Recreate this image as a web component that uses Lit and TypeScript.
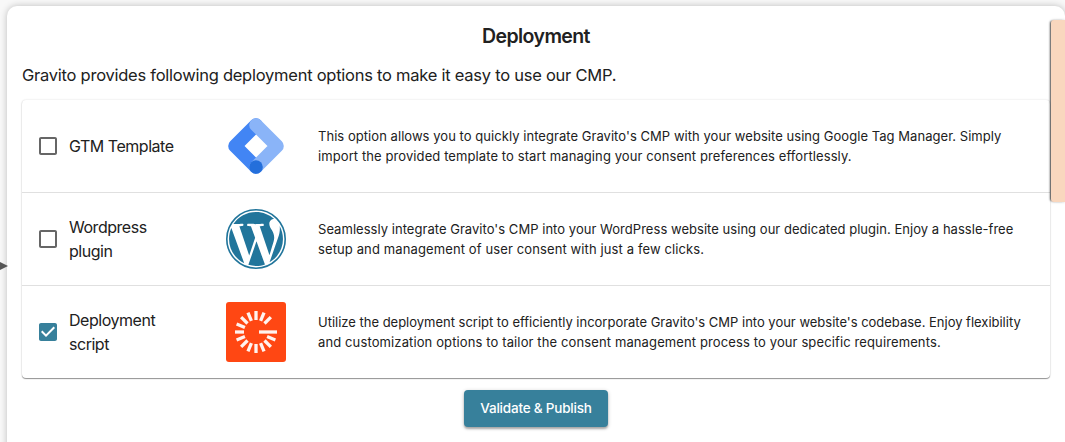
import { LitElement, html, svg, css } from "lit";
import { customElement, property, state } from "lit/decorators.js";
import { classMap } from "lit/directives/class-map.js";
import { styleMap } from "lit/directives/style-map.js";

const gtmLogo = svg`
  <path d="M30 9 L9 30 L30 51" fill="none" stroke="#4285f4" stroke-width="13.6" stroke-linejoin="round" stroke-linecap="round"/>
  <path d="M30 9 L51 30 L30 51" fill="none" stroke="#8ab4f8" stroke-width="13.6" stroke-linejoin="round" stroke-linecap="round"/>
  <circle cx="30" cy="51" r="6.8" fill="#246fdb"/>`;

const wordpressLogo = svg`
  <circle cx="30" cy="30" r="29.2" fill="#fff" stroke="#21759b" stroke-width="1.6"/>
  <path transform="scale(2.5)" fill="#21759b" d="M21.469 6.825c.84 1.537 1.318 3.3 1.318 5.175 0 3.979-2.156 7.456-5.363 9.325l3.295-9.527c.615-1.54.82-2.771.82-3.864 0-.405-.026-.78-.07-1.11m-7.981.105c.647-.03 1.232-.105 1.232-.105.582-.075.514-.93-.067-.899 0 0-1.755.135-2.88.135-1.064 0-2.85-.15-2.85-.15-.585-.03-.661.855-.075.885 0 0 .54.061 1.125.09l1.68 4.605-2.37 7.08L5.354 6.9c.649-.03 1.234-.1 1.234-.1.585-.075.516-.93-.065-.896 0 0-1.746.138-2.874.138-.2 0-.438-.008-.69-.015C4.911 3.15 8.235 1.215 12 1.215c2.809 0 5.365 1.072 7.286 2.833-.046-.003-.091-.009-.141-.009-1.06 0-1.812.923-1.812 1.914 0 .89.513 1.643 1.06 2.531.411.72.89 1.643.89 2.977 0 .915-.354 1.994-.821 3.479l-1.075 3.585-3.9-11.61.001.014zM12 22.784c-1.059 0-2.081-.153-3.048-.437l3.237-9.406 3.315 9.087c.024.053.05.101.078.149-1.12.393-2.325.609-3.582.609M1.211 12c0-1.564.336-3.05.935-4.39L7.29 21.709C3.694 19.96 1.212 16.271 1.211 12"/>`;

// Spokes sit every 22.5 degrees; the gap and the long bar form the G.
const spokes = Array.from({ length: 14 }, (_, i) => (i + 1) * 22.5);
const gravitoLogo = svg`
  <rect width="60" height="60" rx="3" fill="#ff4713"/>
  <path d="M33 30H51" stroke="#fff3ef" stroke-width="3.3"/>
  ${spokes.map(
    (a) => svg`<path d="M42 30H51" stroke="#fff3ef" stroke-width="3.3" transform=${`rotate(${a} 30 30)`}/>`
  )}`;

interface Line {
  copy: string;
  tracking: number;
}

interface Option {
  label: string[];
  logo: unknown;
  text: Line[];
  checked: boolean;
}

@customElement("check-box")
class CheckBox extends LitElement {
  @property({ type: Boolean }) checked = false;

  static styles = css`
    :host { display: block; width: 24px; height: 24px; cursor: pointer; }
    svg { display: block; }
    .off { fill: #666; }
    .on { fill: #37809b; }
  `;

  render() {
    return html`<svg class=${classMap({ on: this.checked, off: !this.checked })} width="24" height="24" viewBox="0 0 24 24">
      ${this.checked
        ? svg`<path d="M19 3H5c-1.11 0-2 .9-2 2v14c0 1.1.89 2 2 2h14c1.11 0 2-.9 2-2V5c0-1.1-.89-2-2-2zm-9 14l-5-5 1.41-1.41L10 14.17l7.59-7.59L19 8l-9 9z"/>`
        : svg`<path d="M19 5v14H5V5h14m0-2H5c-1.1 0-2 .9-2 2v14c0 1.1.9 2 2 2h14c1.1 0 2-.9 2-2V5c0-1.1-.9-2-2-2z"/>`}
    </svg>`;
  }
}

@customElement("app-root")
class AppRoot extends LitElement {
  @state() private options: Option[] = [
    {
      label: ["GTM Template"],
      logo: gtmLogo,
      text: [
        {
          copy: "This option allows you to quickly integrate Gravito's CMP with your website using Google Tag Manager. Simply",
          tracking: 0.046,
        },
        { copy: "import the provided template to start managing your consent preferences effortlessly.", tracking: 0.094 },
      ],
      checked: false,
    },
    {
      label: ["Wordpress", "plugin"],
      logo: wordpressLogo,
      text: [
        {
          copy: "Seamlessly integrate Gravito's CMP into your WordPress website using our dedicated plugin. Enjoy a hassle-free",
          tracking: 0.037,
        },
        { copy: "setup and management of user consent with just a few clicks.", tracking: 0.117 },
      ],
      checked: false,
    },
    {
      label: ["Deployment", "script"],
      logo: gravitoLogo,
      text: [
        {
          copy: "Utilize the deployment script to efficiently incorporate Gravito's CMP into your website's codebase. Enjoy flexibility",
          tracking: -0.012,
        },
        {
          copy: "and customization options to tailor the consent management process to your specific requirements.",
          tracking: 0.12,
        },
      ],
      checked: true,
    },
  ];

  static styles = css`
    :host {
      display: block;
      position: relative;
      box-sizing: border-box;
      height: 442px;
      padding: 6px 0 0 7px;
      overflow: hidden;
      background: #f8f8f8;
      color: #212121;
      font-family: Inter, "Liberation Sans", sans-serif;
    }
    .card {
      box-sizing: border-box;
      height: 460px;
      padding: 15px 15px 0;
      border-radius: 10px;
      background: #fff;
      box-shadow: 0 0 7px rgba(0, 0, 0, 0.24);
    }
    .title {
      margin: 0;
      text-align: center;
      font-size: 19.5px;
      line-height: 30px;
      font-weight: 600;
      letter-spacing: -0.6px;
    }
    .intro {
      margin: 12px 0;
      font-size: 16.5px;
      line-height: 25px;
      letter-spacing: -0.25px;
      white-space: nowrap;
    }
    .paper {
      border-radius: 4px;
      background: #fff;
      box-shadow: 0 1px 1px rgba(0, 0, 0, 0.4), 0 0 2px rgba(0, 0, 0, 0.16);
    }
    .row {
      display: grid;
      grid-template-columns: 30px 157px 92px 1fr;
      align-items: center;
      box-sizing: border-box;
      height: 93px;
      padding-left: 14px;
      border-bottom: 1px solid #e0e0e0;
    }
    .row:last-child { height: 92px; border-bottom: 0; }
    .label {
      padding-left: 3px;
      font-size: 16px;
      line-height: 24px;
      letter-spacing: -0.47px;
    }
    .logo { display: block; margin-left: 3px; }
    .text {
      padding-left: 3px;
      font-size: 13px;
      line-height: 20px;
      white-space: nowrap;
    }
    .line { display: block; }
    .actions { display: flex; justify-content: center; padding: 12px 0 0; }
    .publish {
      box-sizing: border-box;
      width: 144px;
      height: 37px;
      padding: 0;
      border: 0;
      border-radius: 4px;
      background: #37809b;
      color: #fff;
      font: 500 13.5px/37px Inter, "Liberation Sans", sans-serif;
      letter-spacing: -0.2px;
      box-shadow: 0 2px 2px rgba(0, 0, 0, 0.25), 0 1px 4px rgba(0, 0, 0, 0.2);
    }
    .side-tab {
      position: absolute;
      top: 20px;
      right: 0;
      width: 14px;
      height: 182px;
      border-radius: 3px 0 0 3px;
      background: #f9d7be;
      box-shadow: -2px 0 2px -1px rgba(0, 0, 0, 0.65), 0 0 3px rgba(0, 0, 0, 0.2);
    }
    .arrow {
      position: absolute;
      left: 0;
      top: 262px;
      border: solid transparent;
      border-width: 4.5px 0 4.5px 8px;
      border-left-color: #555;
    }
  `;

  private toggle(index: number) {
    this.options = this.options.map((o, i) => (i === index ? { ...o, checked: !o.checked } : o));
  }

  render() {
    return html`
      <div class="card">
        <h1 class="title">Deployment</h1>
        <p class="intro">Gravito provides following deployment options to make it easy to use our CMP.</p>
        <div class="paper">
          ${this.options.map(
            (o, i) => html`<div class="row">
              <check-box .checked=${o.checked} @click=${() => this.toggle(i)}></check-box>
              <div class="label">${o.label.map((l) => html`<span class="line">${l}</span>`)}</div>
              <svg class="logo" width="60" height="60" viewBox="0 0 60 60">${o.logo}</svg>
              <div class="text">
                ${o.text.map(
                  (l) => html`<span class="line" style=${styleMap({ letterSpacing: `${l.tracking}px` })}>${l.copy}</span>`
                )}
              </div>
            </div>`
          )}
        </div>
        <div class="actions"><button class="publish">Validate &amp; Publish</button></div>
      </div>
      <div class="side-tab"></div>
      <div class="arrow"></div>
    `;
  }
}
